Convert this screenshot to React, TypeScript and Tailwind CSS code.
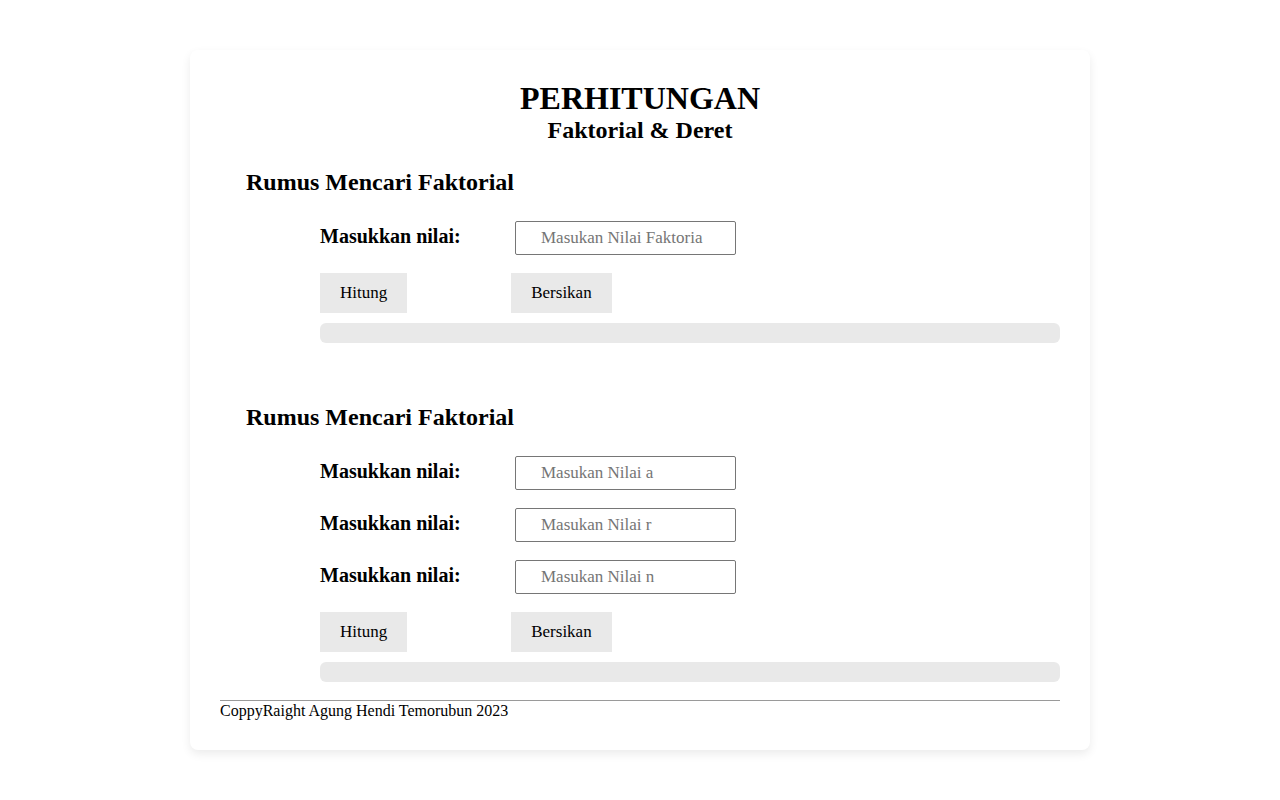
const serif = { fontFamily: '"Liberation Serif", "Times New Roman", serif' };

function InputRow({ placeholder }: { placeholder: string }) {
  return (
    <div className="flex items-center">
      <label className="mb-[4px] w-[195px] text-[20px] font-bold leading-[24px] text-black">
        Masukkan nilai:
      </label>
      <input
        type="text"
        placeholder={placeholder}
        style={serif}
        className="h-[34px] w-[221px] rounded-[2px] border border-[#767676] bg-white pl-[25px] pr-[26px] text-[17px] text-black placeholder:text-[#757575] outline-none"
      />
    </div>
  );
}

function Buttons() {
  return (
    <div className="flex">
      <button
        style={serif}
        className="h-[40px] bg-[#e9e9e9] px-[20px] text-[17px] text-black"
      >
        Hitung
      </button>
      <button
        style={serif}
        className="ml-[104px] h-[40px] bg-[#e9e9e9] px-[20px] text-[17px] text-black"
      >
        Bersikan
      </button>
    </div>
  );
}

export default function App() {
  return (
    <div className="min-h-screen bg-white pt-[50px]" style={serif}>
      <div className="mx-auto w-[900px] rounded-lg bg-white px-[30px] pt-[30px] pb-[30px] shadow-[0_4px_10px_rgba(0,0,0,0.08)]">
        {/* Heading */}
        <div className="text-center">
          <h1 className="text-[32px] font-bold leading-[36px]">PERHITUNGAN</h1>
          <h2 className="text-[24px] font-bold leading-[28px]">Faktorial &amp; Deret</h2>
        </div>

        {/* Faktorial */}
        <h2 className="ml-[26px] mt-[24px] text-[24px] font-bold leading-[28px]">
          Rumus Mencari Faktorial
        </h2>
        <div className="ml-[100px] mt-[25px] flex flex-col">
          <InputRow placeholder="Masukan Nilai Faktoria" />
          <div className="mt-[18px]">
            <Buttons />
          </div>
          <div className="mt-[10px] h-[20px] rounded-md bg-[#e9e9e9]" />
        </div>

        {/* Deret */}
        <h2 className="ml-[26px] mt-[60px] text-[24px] font-bold leading-[28px]">
          Rumus Mencari Faktorial
        </h2>
        <div className="ml-[100px] mt-[25px] flex flex-col gap-[18px]">
          <InputRow placeholder="Masukan Nilai a" />
          <InputRow placeholder="Masukan Nilai r" />
          <InputRow placeholder="Masukan Nilai n" />
          <Buttons />
        </div>
        <div className="ml-[100px] mt-[10px] h-[20px] rounded-md bg-[#e9e9e9]" />

        {/* Footer */}
        <hr className="mt-[18px] border-t border-[#9a9a9a]" />
        <p className="mt-[1px] text-[16px] leading-[18px] text-black">
          CoppyRaight Agung Hendi Temorubun 2023
        </p>
      </div>
    </div>
  );
}
